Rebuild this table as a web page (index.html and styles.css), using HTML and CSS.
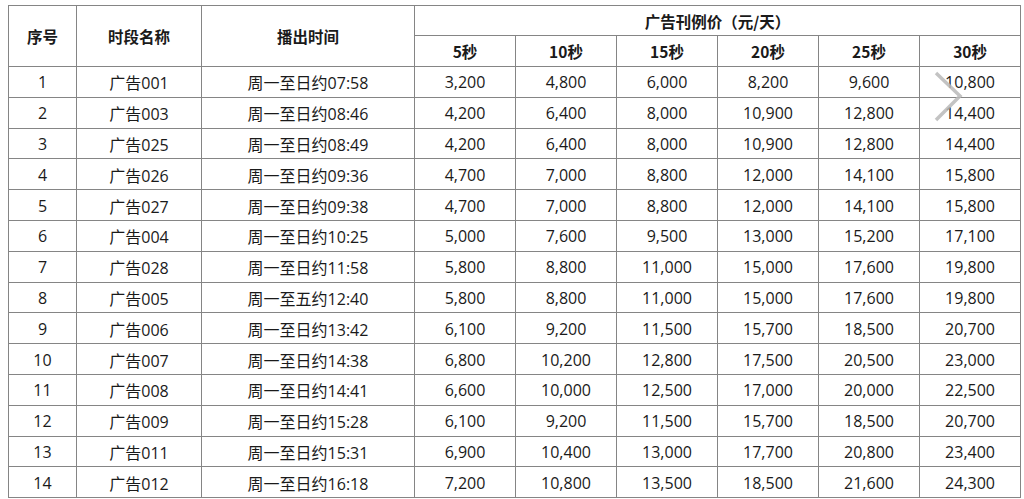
FILE: index.html
```html
<!DOCTYPE html>
<html lang="zh-CN">
<head>
<meta charset="utf-8">
<title>广告刊例价</title>
<link rel="stylesheet" href="styles.css">
</head>
<body>
<div class="wrap">
<table class="price">
  <colgroup>
    <col class="c-no"><col class="c-name"><col class="c-time">
    <col class="c-p"><col class="c-p"><col class="c-p"><col class="c-p"><col class="c-p"><col class="c-p">
  </colgroup>
  <thead>
    <tr class="h1">
      <th rowspan="2">序号</th>
      <th rowspan="2">时段名称</th>
      <th rowspan="2">播出时间</th>
      <th colspan="6">广告刊例价（元/天）</th>
    </tr>
    <tr class="h2">
      <th>5秒</th><th>10秒</th><th>15秒</th><th>20秒</th><th>25秒</th><th>30秒</th>
    </tr>
  </thead>
  <tbody>
    <tr><td>1</td><td>广告001</td><td>周一至日约07:58</td><td>3,200</td><td>4,800</td><td>6,000</td><td>8,200</td><td>9,600</td><td>10,800</td></tr>
    <tr><td>2</td><td>广告003</td><td>周一至日约08:46</td><td>4,200</td><td>6,400</td><td>8,000</td><td>10,900</td><td>12,800</td><td>14,400</td></tr>
    <tr><td>3</td><td>广告025</td><td>周一至日约08:49</td><td>4,200</td><td>6,400</td><td>8,000</td><td>10,900</td><td>12,800</td><td>14,400</td></tr>
    <tr><td>4</td><td>广告026</td><td>周一至日约09:36</td><td>4,700</td><td>7,000</td><td>8,800</td><td>12,000</td><td>14,100</td><td>15,800</td></tr>
    <tr><td>5</td><td>广告027</td><td>周一至日约09:38</td><td>4,700</td><td>7,000</td><td>8,800</td><td>12,000</td><td>14,100</td><td>15,800</td></tr>
    <tr><td>6</td><td>广告004</td><td>周一至日约10:25</td><td>5,000</td><td>7,600</td><td>9,500</td><td>13,000</td><td>15,200</td><td>17,100</td></tr>
    <tr><td>7</td><td>广告028</td><td>周一至日约11:58</td><td>5,800</td><td>8,800</td><td>11,000</td><td>15,000</td><td>17,600</td><td>19,800</td></tr>
    <tr><td>8</td><td>广告005</td><td>周一至五约12:40</td><td>5,800</td><td>8,800</td><td>11,000</td><td>15,000</td><td>17,600</td><td>19,800</td></tr>
    <tr><td>9</td><td>广告006</td><td>周一至日约13:42</td><td>6,100</td><td>9,200</td><td>11,500</td><td>15,700</td><td>18,500</td><td>20,700</td></tr>
    <tr><td>10</td><td>广告007</td><td>周一至日约14:38</td><td>6,800</td><td>10,200</td><td>12,800</td><td>17,500</td><td>20,500</td><td>23,000</td></tr>
    <tr><td>11</td><td>广告008</td><td>周一至日约14:41</td><td>6,600</td><td>10,000</td><td>12,500</td><td>17,000</td><td>20,000</td><td>22,500</td></tr>
    <tr><td>12</td><td>广告009</td><td>周一至日约15:28</td><td>6,100</td><td>9,200</td><td>11,500</td><td>15,700</td><td>18,500</td><td>20,700</td></tr>
    <tr><td>13</td><td>广告011</td><td>周一至日约15:31</td><td>6,900</td><td>10,400</td><td>13,000</td><td>17,700</td><td>20,800</td><td>23,400</td></tr>
    <tr><td>14</td><td>广告012</td><td>周一至日约16:18</td><td>7,200</td><td>10,800</td><td>13,500</td><td>18,500</td><td>21,600</td><td>24,300</td></tr>
  </tbody>
</table>
<svg class="next" width="34" height="56" viewBox="0 0 34 56" aria-hidden="true">
  <polyline points="4,3 28,26 4,50" fill="none" stroke="#b8b8b8" stroke-width="3.5" stroke-opacity="0.85"/>
</svg>
</div>
</body>
</html>
```

FILE: styles.css
```css
html, body {
  margin: 0;
  padding: 0;
  background: #ffffff;
}

body {
  font-family: "Open Sans", "Noto Sans CJK SC", sans-serif;
  color: #1a1a1a;
  font-size: 16px;
}

.wrap {
  position: relative;
  padding: 5px 0 0 8px;
  width: 1013px;
}

.price {
  border-collapse: collapse;
  table-layout: fixed;
  width: 1013px;
}

.c-no { width: 68px; }
.c-name { width: 125px; }
.c-time { width: 213px; }
.c-p { width: 101px; }

.price th,
.price td {
  border: 1px solid #858585;
  text-align: center;
  padding: 0;
  white-space: nowrap;
}

.price td {
  padding-top: 1px;
}

.price th {
  font-weight: 700;
  font-family: "Noto Sans CJK SC", "Open Sans", sans-serif;
  font-size: 15.5px;
}

.h1 { height: 30px; }
.h2 { height: 31px; }

.price tbody tr { height: 30.8px; }

.next {
  position: absolute;
  left: 932px;
  top: 70px;
}
```
